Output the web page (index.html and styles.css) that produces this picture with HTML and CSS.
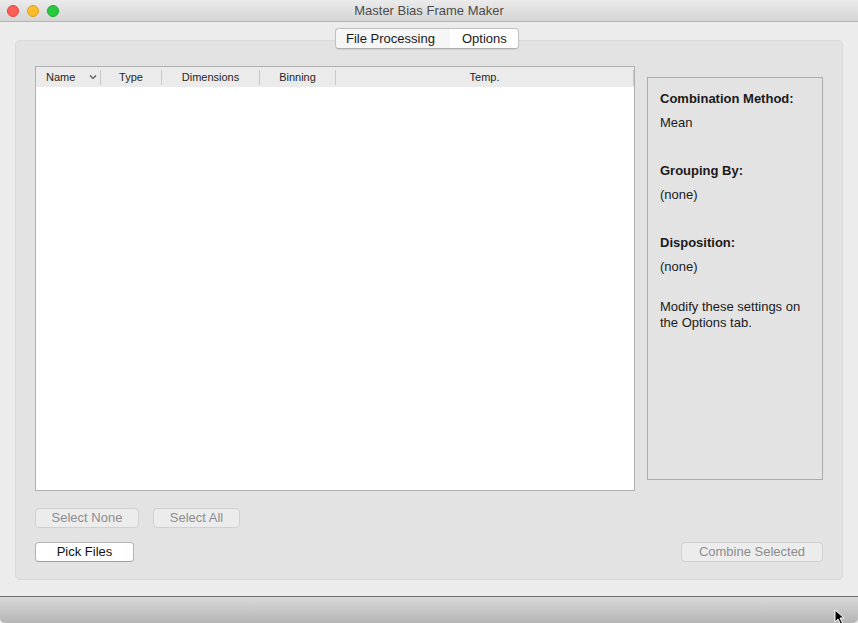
FILE: index.html
```html
<!DOCTYPE html>
<html>
<head>
<meta charset="utf-8">
<link rel="stylesheet" href="styles.css">
</head>
<body>
<div class="window">
  <div class="titlebar">
    <div class="lights">
      <span class="light red"></span>
      <span class="light yellow"></span>
      <span class="light green"></span>
    </div>
    <div class="title">Master Bias Frame Maker</div>
  </div>
  <div class="content">
    <div class="tabs">
      <div class="tab">File Processing</div>
      <div class="tab selected">Options</div>
    </div>
    <div class="tabbox">
      <div class="mainrow">
        <div class="table">
          <div class="thead">
            <div class="th c-name">Name <svg class="chev" width="8" height="6" viewBox="0 0 8 6"><path d="M1 1.5 L4 4.5 L7 1.5" fill="none" stroke="#555" stroke-width="1.2"/></svg></div>
            <div class="th c-type">Type</div>
            <div class="th c-dim">Dimensions</div>
            <div class="th c-bin">Binning</div>
            <div class="th c-temp">Temp.</div>
          </div>
          <div class="tbody"></div>
        </div>
        <div class="panel">
          <div class="block">
            <div class="heading">Combination Method:</div>
            <div class="value">Mean</div>
          </div>
          <div class="block">
            <div class="heading">Grouping By:</div>
            <div class="value">(none)</div>
          </div>
          <div class="block last">
            <div class="heading">Disposition:</div>
            <div class="value">(none)</div>
          </div>
          <div class="note">Modify these settings on the Options tab.</div>
        </div>
      </div>
      <div class="btnrow first">
        <button class="btn disabled w-none">Select None</button>
        <button class="btn disabled w-all">Select All</button>
      </div>
      <div class="btnrow second">
        <button class="btn primary w-pick">Pick Files</button>
        <button class="btn disabled w-combine">Combine Selected</button>
      </div>
    </div>
  </div>
  <div class="bottombar"></div>
  <svg class="cursor" width="14" height="16" viewBox="0 0 14 16"><path d="M1 1 L1 13 L4 10 L6.5 15 L8.5 14 L6 9 L10 9 Z" fill="#000" stroke="#fff" stroke-width="1"/></svg>
</div>
</body>
</html>
```

FILE: styles.css
```css
* { box-sizing: border-box; }
html, body { margin: 0; padding: 0; }
body {
  width: 858px;
  height: 623px;
  overflow: hidden;
  font-family: "Liberation Sans", Arial, sans-serif;
  font-size: 13px;
  color: #1a1a1a;
  background: #ececec;
}
.window {
  position: relative;
  width: 858px;
  height: 623px;
  display: flex;
  flex-direction: column;
  background: #ececec;
}
.titlebar {
  height: 22px;
  flex: none;
  display: flex;
  align-items: center;
  justify-content: center;
  position: relative;
  background: linear-gradient(#ebebeb, #d5d5d5);
  border-bottom: 1px solid #b3b3b3;
}
.lights {
  position: absolute;
  left: 7px;
  top: 5px;
  display: flex;
  gap: 8px;
}
.light {
  width: 12px;
  height: 12px;
  border-radius: 50%;
  display: block;
}
.red { background: #fc5f57; border: 1px solid #e0443e; }
.yellow { background: #fdbc2e; border: 1px solid #dea123; }
.green { background: #28c840; border: 1px solid #1aab29; }
.title {
  color: #4c4c4c;
  font-size: 13px;
  line-height: 16px;
  margin-top: 1px;
}
.content {
  flex: none;
  height: 574px;
  padding: 6px 15px 0 15px;
  display: flex;
  flex-direction: column;
}
.tabs {
  align-self: center;
  margin-left: -4px;
  position: relative;
  z-index: 1;
  display: flex;
  height: 21px;
  border: 1px solid #c2c2c2;
  border-bottom-color: #b0b0b0;
  border-radius: 4px;
  overflow: hidden;
  background: #f6f6f6;
  box-shadow: 0 0.5px 1px rgba(0,0,0,0.08);
}
.tab {
  line-height: 19px;
  font-size: 13px;
  color: #1a1a1a;
  padding: 0 0 0 10px;
}
.tab:first-child { width: 114px; }
.tab.selected {
  background: #ffffff;
  width: 68px;
  padding: 0 0 0 12px;
}
.tabbox {
  margin-top: -9px;
  height: 540px;
  background: #e3e3e3;
  border: 1px solid #d9d9d9;
  border-radius: 5px;
  padding: 25px 19px 0 19px;
}
.mainrow {
  display: flex;
  align-items: flex-start;
  gap: 12px;
}
.table {
  width: 600px;
  height: 425px;
  border: 1px solid #b0b0b0;
  background: #fff;
  display: flex;
  flex-direction: column;
}
.thead {
  height: 20px;
  flex: none;
  display: flex;
  align-items: center;
  background: #ebebeb;
  font-size: 11px;
  color: #262626;
}
.th {
  height: 15px;
  line-height: 15px;
  border-right: 1px solid #c9c9c9;
  text-align: center;
  flex: none;
}
.c-name { width: 65px; text-align: left; padding-left: 10px; display: flex; align-items: center; }
.chev { margin-left: 14px; }
.c-type { width: 61px; }
.c-dim { width: 98px; }
.c-bin { width: 76px; }
.c-temp { width: 298px; }
.tbody { flex: 1; background: #fff; }
.panel {
  margin-top: 11px;
  width: 176px;
  height: 403px;
  border: 1px solid #ababab;
  background: #e3e3e3;
  padding: 13px 12px 0 12px;
  line-height: 16px;
}
.heading { font-weight: bold; }
.value { margin-top: 8px; }
.block { margin-bottom: 32px; }
.block.last { margin-bottom: 24px; }
.note { width: 160px; }
.btnrow {
  display: flex;
  gap: 14px;
}
.btnrow.first { margin-top: 17px; }
.btnrow.second { margin-top: 14px; justify-content: space-between; }
.btn {
  font-family: "Liberation Sans", Arial, sans-serif;
  font-size: 13px;
  height: 20px;
  line-height: 18px;
  padding: 0;
  border-radius: 4px;
  text-align: center;
}
.btn.disabled {
  color: #8c8c8c;
  background: #ececec;
  border: 1px solid #d0d0d0;
}
.btn.primary {
  color: #111;
  background: #ffffff;
  border: 1px solid #b5b5b5;
  border-bottom-color: #a0a0a0;
}
.w-none { width: 104px; }
.w-all { width: 87px; }
.w-pick { width: 99px; }
.w-combine { width: 142px; }
.bottombar {
  flex: 1;
  border-top: 1px solid #6e6e6e;
  background: linear-gradient(#d9d9d9, #b5b5b5);
  border-bottom-left-radius: 5px;
  border-bottom-right-radius: 5px;
}
.cursor {
  position: absolute;
  left: 834px;
  top: 609px;
}
```
